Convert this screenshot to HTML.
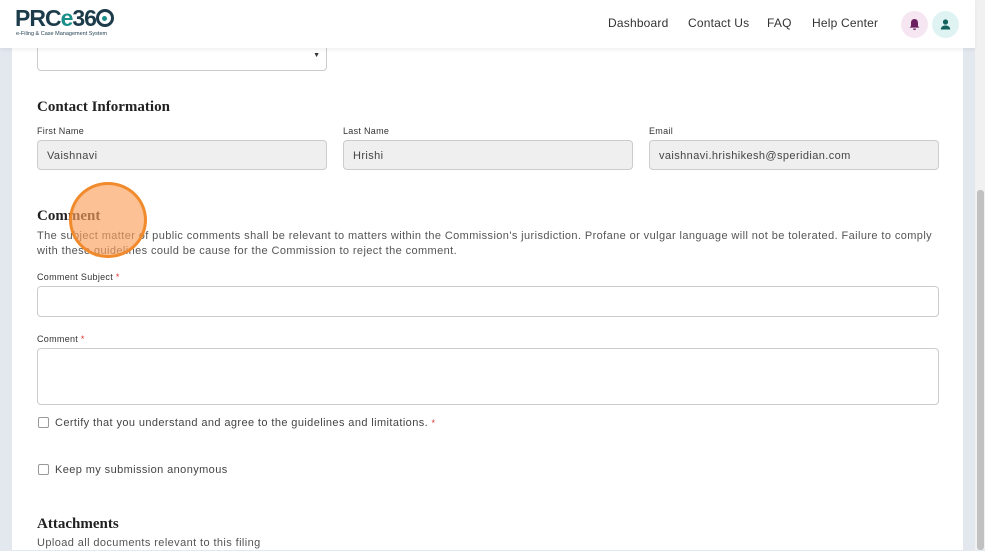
<!DOCTYPE html>
<html><head><meta charset="utf-8"><style>
*{box-sizing:border-box;margin:0;padding:0}
body{width:985px;height:550px;overflow:hidden;background:#e3e8ef;font-family:"Liberation Sans",sans-serif;position:relative;color:#333}
.panel{position:absolute;left:12px;top:0;width:951px;height:550px;background:#fff}
.hdr{position:absolute;left:0;top:0;width:975px;height:48px;background:#fff;box-shadow:0 2px 4px rgba(0,0,0,.06);z-index:5}
.sb{position:absolute;left:975px;top:0;width:10px;height:550px;background:#f1f1f1}
.thumb{position:absolute;left:977px;top:190px;width:7px;height:360px;background:#c1c1c1;border-radius:3px}
.a{position:absolute;white-space:nowrap}
.nav{font-size:12px;color:#333;top:16px;letter-spacing:.2px}
h3{position:absolute;font-family:"Liberation Serif",serif;font-weight:bold;font-size:15px;color:#222}
.lbl{position:absolute;font-size:9px;color:#333;letter-spacing:.3px}
.inp{position:absolute;border:1px solid #ccc;border-radius:4px;background:#fff}
.ro{background:#efefef;font-size:11px;color:#444;padding:9px 0 0 9px;letter-spacing:.4px}
.txt{position:absolute;font-size:11px;color:#555;line-height:15px;letter-spacing:.4px}
.cb{position:absolute;width:11px;height:11px;border:1px solid #999;border-radius:2px;background:#fff}
.req{color:#d33}
</style></head><body>
<div class="panel"></div>
<div class="sb"></div><div class="thumb"></div>
<div class="hdr">
 <div class="a" style="left:15px;top:5px;font-size:23px;font-weight:bold;color:#1d3c4b;letter-spacing:-1px">PRC<span style="color:#1a8f8a">e</span>36<span style="display:inline-block;width:18px;height:18px;border:3px solid #1d3c4b;border-radius:50%;vertical-align:-1px;position:relative"><span style="position:absolute;left:3.5px;top:3.5px;width:5px;height:5px;background:#1a8f8a;border-radius:50%"></span></span></div>
 <div class="a" style="left:16px;top:31px;font-size:5.5px;color:#1d3c4b">e-Filing &amp; Case Management System</div>
 <div class="a nav" style="left:608px">Dashboard</div>
 <div class="a nav" style="left:688px">Contact Us</div>
 <div class="a nav" style="left:767px">FAQ</div>
 <div class="a nav" style="left:812px">Help Center</div>
 <div class="a" style="left:901px;top:11px;width:27px;height:27px;border-radius:50%;background:#f5e6f1"><svg width="27" height="27" viewBox="0 0 27 27"><path d="M13.5 8c-2.3 0-3.5 1.8-3.5 4v3l-1.3 1.6h9.6L17 15v-3c0-2.2-1.2-4-3.5-4z" fill="#6b1f5e"/><rect x="12.3" y="17.5" width="2.4" height="1.4" fill="#6b1f5e"/></svg></div>
 <div class="a" style="left:932px;top:11px;width:27px;height:27px;border-radius:50%;background:#dff3f3"><svg width="27" height="27" viewBox="0 0 27 27"><circle cx="13.5" cy="11" r="2.6" fill="#14605c"/><path d="M8.8 18.5c0-2.8 2.2-4 4.7-4s4.7 1.2 4.7 4z" fill="#14605c"/></svg></div>
</div>
<div class="inp" style="left:37px;top:40px;width:290px;height:31px"><span class="a" style="right:6px;top:11px;font-size:7px;color:#333">▼</span></div>
<h3 style="left:37px;top:99px">Contact Information</h3>
<div class="lbl" style="left:37px;top:126px">First Name</div>
<div class="lbl" style="left:343px;top:126px">Last Name</div>
<div class="lbl" style="left:649px;top:126px">Email</div>
<div class="inp ro" style="left:37px;top:140px;width:290px;height:30px">Vaishnavi</div>
<div class="inp ro" style="left:343px;top:140px;width:290px;height:30px">Hrishi</div>
<div class="inp ro" style="left:649px;top:140px;width:290px;height:30px">vaishnavi.hrishikesh@speridian.com</div>
<h3 style="left:37px;top:208px">Comment</h3>
<div class="txt" style="left:37px;top:229px">The subject matter of public comments shall be relevant to matters within the Commission's jurisdiction. Profane or vulgar language will not be tolerated. Failure to comply<br>with these guidelines could be cause for the Commission to reject the comment.</div>
<div class="lbl" style="left:37px;top:272px">Comment Subject <span class="req">*</span></div>
<div class="inp" style="left:37px;top:286px;width:902px;height:31px"></div>
<div class="lbl" style="left:37px;top:334px">Comment <span class="req">*</span></div>
<div class="inp" style="left:37px;top:348px;width:902px;height:57px"></div>
<div class="cb" style="left:38px;top:417px"></div>
<div class="txt" style="left:55px;top:416px;color:#444">Certify that you understand and agree to the guidelines and limitations. <span class="req" style="font-size:9px">*</span></div>
<div class="cb" style="left:38px;top:464px"></div>
<div class="txt" style="left:55px;top:463px;color:#444">Keep my submission anonymous</div>
<h3 style="left:37px;top:516px">Attachments</h3>
<div class="txt" style="left:37px;top:536px">Upload all documents relevant to this filing</div>
<div class="a" style="left:69px;top:182px;width:78px;height:76px;border-radius:50%;background:rgba(250,160,90,.65);border:3px solid #f18a2c"></div>
</body></html>
